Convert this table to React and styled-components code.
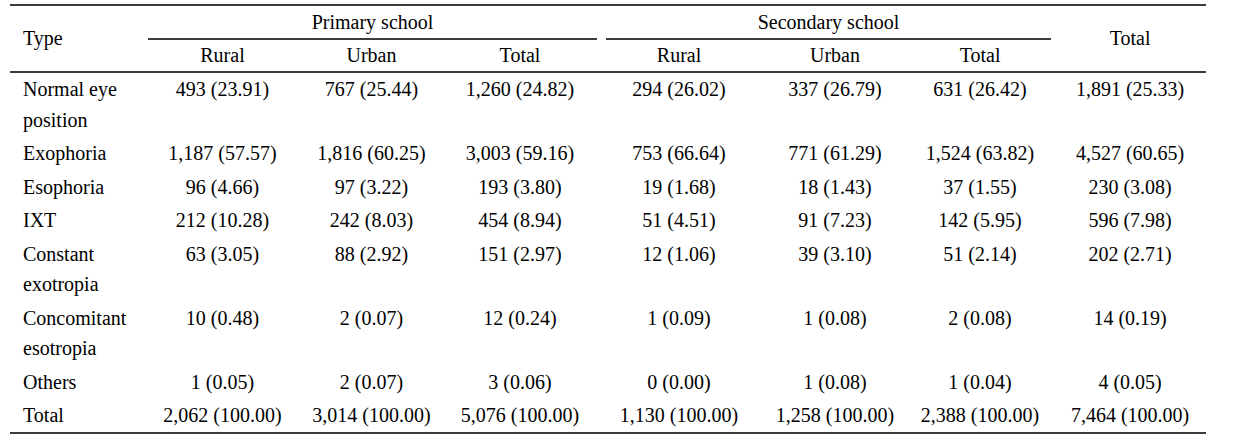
import React from "react";
import styled, { createGlobalStyle } from "styled-components";

const GlobalStyle = createGlobalStyle`
  html, body {
    margin: 0;
    padding: 0;
    background: #ffffff;
  }
  body {
    font-family: "Liberation Serif", "Times New Roman", serif;
    color: #000000;
  }
`;

const rows = [
  {
    type: "Normal eye position",
    values: ["493 (23.91)", "767 (25.44)", "1,260 (24.82)", "294 (26.02)", "337 (26.79)", "631 (26.42)", "1,891 (25.33)"],
  },
  {
    type: "Exophoria",
    values: ["1,187 (57.57)", "1,816 (60.25)", "3,003 (59.16)", "753 (66.64)", "771 (61.29)", "1,524 (63.82)", "4,527 (60.65)"],
  },
  {
    type: "Esophoria",
    values: ["96 (4.66)", "97 (3.22)", "193 (3.80)", "19 (1.68)", "18 (1.43)", "37 (1.55)", "230 (3.08)"],
  },
  {
    type: "IXT",
    values: ["212 (10.28)", "242 (8.03)", "454 (8.94)", "51 (4.51)", "91 (7.23)", "142 (5.95)", "596 (7.98)"],
  },
  {
    type: "Constant exotropia",
    values: ["63 (3.05)", "88 (2.92)", "151 (2.97)", "12 (1.06)", "39 (3.10)", "51 (2.14)", "202 (2.71)"],
  },
  {
    type: "Concomitant esotropia",
    values: ["10 (0.48)", "2 (0.07)", "12 (0.24)", "1 (0.09)", "1 (0.08)", "2 (0.08)", "14 (0.19)"],
  },
  {
    type: "Others",
    values: ["1 (0.05)", "2 (0.07)", "3 (0.06)", "0 (0.00)", "1 (0.08)", "1 (0.04)", "4 (0.05)"],
  },
  {
    type: "Total",
    values: ["2,062 (100.00)", "3,014 (100.00)", "5,076 (100.00)", "1,130 (100.00)", "1,258 (100.00)", "2,388 (100.00)", "7,464 (100.00)"],
  },
];

const colWidths = [138, 149, 149, 148, 170, 142, 148, 152];
const subHeads = ["Rural", "Urban", "Total", "Rural", "Urban", "Total"];

const RULE = "2px solid #3c3c3c";

const Page = styled.div`
  padding: 4px 0 0 10px;
`;

const Table = styled.table`
  width: 1196px;
  table-layout: fixed;
  border-collapse: separate;
  border-spacing: 0;
  font-size: 20px;
  line-height: 30.5px;
`;

const HeadCell = styled.th`
  font-weight: normal;
  text-align: ${(p) => (p.$left ? "left" : "center")};
  vertical-align: middle;
  padding: 0 0 0 ${(p) => (p.$left ? "13px" : "0")};
  border-top: ${(p) => (p.$top ? RULE : "none")};
  border-bottom: ${(p) => (p.$bottom ? RULE : "none")};
`;

const GroupCell = styled.th`
  font-weight: normal;
  padding: 1px 0 0;
  border-top: ${RULE};
`;

const GroupLabel = styled.div`
  text-align: center;
  padding-bottom: 0;
  border-bottom: ${RULE};
  margin: 0 ${(p) => p.$right}px 0 ${(p) => p.$left}px;
`;

const SubHead = styled.th`
  font-weight: normal;
  text-align: center;
  padding: 0.5px 0 0;
  border-bottom: ${RULE};
`;

const TypeCell = styled.td`
  text-align: left;
  vertical-align: top;
  padding: 1.5px 10px 1.5px 13px;
  border-bottom: ${(p) => (p.$last ? RULE : "none")};
`;

const ValueCell = styled.td`
  text-align: center;
  vertical-align: top;
  white-space: nowrap;
  padding: 1.5px 0;
  border-bottom: ${(p) => (p.$last ? RULE : "none")};
`;

export default function App() {
  return (
    <Page>
      <GlobalStyle />
      <Table>
        <colgroup>
          {colWidths.map((w, i) => (
            <col key={i} style={{ width: w }} />
          ))}
        </colgroup>
        <thead>
          <tr>
            <HeadCell rowSpan={2} $left $top $bottom>
              Type
            </HeadCell>
            <GroupCell colSpan={3}>
              <GroupLabel $left={0} $right={-3}>
                Primary school
              </GroupLabel>
            </GroupCell>
            <GroupCell colSpan={3}>
              <GroupLabel $left={12} $right={3}>
                Secondary school
              </GroupLabel>
            </GroupCell>
            <HeadCell rowSpan={2} $top $bottom>
              Total
            </HeadCell>
          </tr>
          <tr>
            {subHeads.map((h, i) => (
              <SubHead key={i}>{h}</SubHead>
            ))}
          </tr>
        </thead>
        <tbody>
          {rows.map((row, r) => {
            const last = r === rows.length - 1;
            return (
              <tr key={row.type}>
                <TypeCell $last={last}>{row.type}</TypeCell>
                {row.values.map((v, i) => (
                  <ValueCell key={i} $last={last}>
                    {v}
                  </ValueCell>
                ))}
              </tr>
            );
          })}
        </tbody>
      </Table>
    </Page>
  );
}
